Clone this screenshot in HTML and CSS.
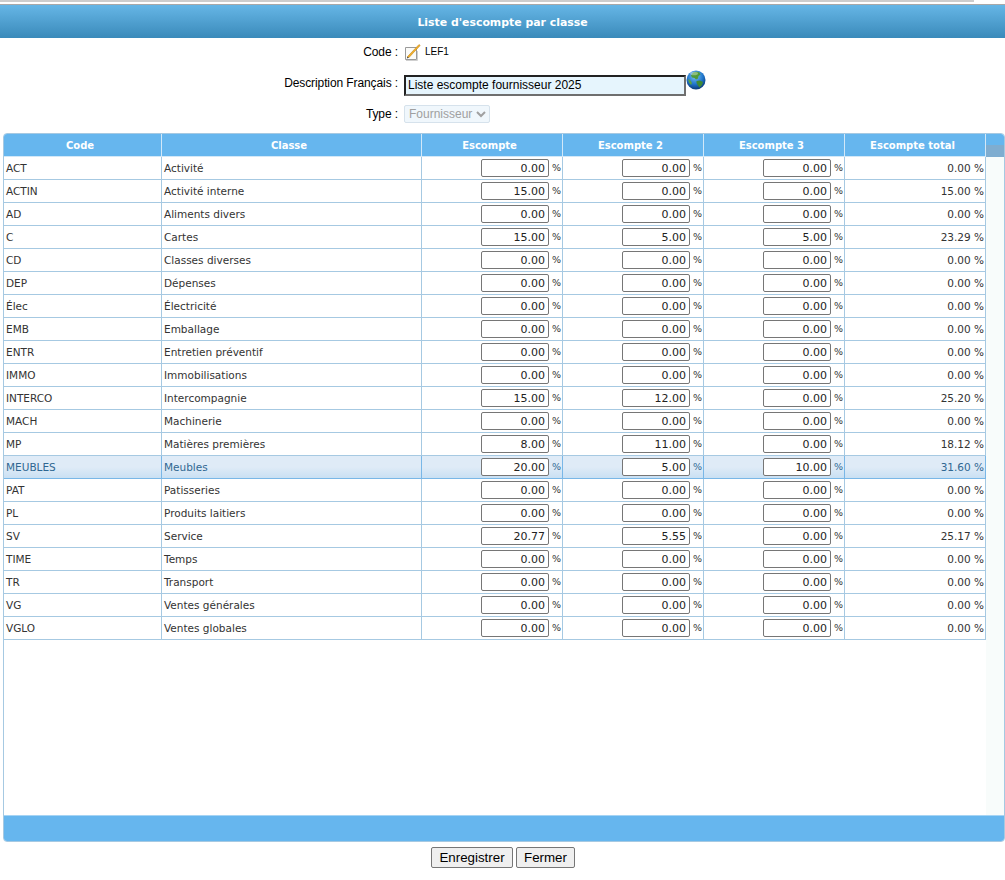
FILE: index.html
```html
<!DOCTYPE html>
<html lang="fr">
<head>
    <meta charset="UTF-8">
    <title>Liste d'escompte par classe</title>
    <link rel="stylesheet" href="styles.css">
</head>
<body>
    <div class="top-strip"><div class="top-strip-bar"></div></div>
    <div class="title-bar">Liste d'escompte par classe</div>

    <div class="form">
        <div class="form-row row-code">
            <label>Code :</label>
            <div class="field">
                <svg class="note-icon" width="16" height="17" viewBox="0 0 16 17">
                    <path d="M.5 3.500H11.500V15.500H.5Z" fill="#fbfbf9" stroke="#9a9a9a"/>
                    <path d="M1 16.500H12.500V7" fill="none" stroke="#cfcfcf"/>
                    <path d="M2.500 12.600 14 .5l1.200 1L3.800 13.700Z" fill="#f3b02a" stroke="#b97c12" stroke-width=".5"/>
                    <path d="M2.500 12.600 3.800 13.700 1.800 14.500Z" fill="#3a3a3a"/>
                </svg>
                <span class="code-value">LEF1</span>
            </div>
        </div>
        <div class="form-row row-desc">
            <label for="desc">Description Français :</label>
            <div class="field">
                <input id="desc" class="desc-input" type="text" value="Liste escompte fournisseur 2025">
                <svg class="globe-icon" width="20" height="20" viewBox="0 0 20 20">
                    <defs>
                        <radialGradient id="sea" cx="45%" cy="30%" r="70%">
                            <stop offset="0" stop-color="#7cc4f4"/>
                            <stop offset=".6" stop-color="#1f75cc"/>
                            <stop offset="1" stop-color="#0b3a78"/>
                        </radialGradient>
                    </defs>
                    <circle cx="10" cy="10" r="9.500" fill="url(#sea)"/>
                    <path d="M7 2.500c2-1 5-1 6.500 0l1 2-2 1.500-.5 2.500-2 1-1.500-1.500-2.500-.5L5 5.500Z" fill="#4f9a3a"/>
                    <path d="M10.500 11l3.500-.5 3 1.500-1 3-2.500 2.500-1.500-2-1.500-2.500Z" fill="#3f8a35"/>
                    <path d="M2 9l2.500 1.500L6 13l-1 2-2-2.500Z" fill="#5aa342"/>
                    <ellipse cx="8" cy="3.500" rx="4" ry="1.800" fill="#fff" opacity=".35"/>
                </svg>
            </div>
        </div>
        <div class="form-row row-type">
            <label for="type">Type :</label>
            <div class="field">
                <select id="type" class="type-select" disabled>
                    <option>Fournisseur</option>
                </select>
            </div>
        </div>
    </div>

    <div class="panel">
        <div class="panel-body">
            <table class="grid">
                <colgroup>
                    <col class="col-code"><col class="col-class">
                    <col class="col-num"><col class="col-num"><col class="col-num"><col class="col-num">
                </colgroup>
                <thead>
                    <tr><th>Code</th><th>Classe</th><th>Escompte</th><th>Escompte 2</th><th>Escompte 3</th><th>Escompte total</th></tr>
                </thead>
                <tbody>
                    <tr><td>ACT</td><td>Activité</td><td class="pct"><input value="0.00"> %</td><td class="pct"><input value="0.00"> %</td><td class="pct"><input value="0.00"> %</td><td class="total">0.00 %</td></tr>
                    <tr><td>ACTIN</td><td>Activité interne</td><td class="pct"><input value="15.00"> %</td><td class="pct"><input value="0.00"> %</td><td class="pct"><input value="0.00"> %</td><td class="total">15.00 %</td></tr>
                    <tr><td>AD</td><td>Aliments divers</td><td class="pct"><input value="0.00"> %</td><td class="pct"><input value="0.00"> %</td><td class="pct"><input value="0.00"> %</td><td class="total">0.00 %</td></tr>
                    <tr><td>C</td><td>Cartes</td><td class="pct"><input value="15.00"> %</td><td class="pct"><input value="5.00"> %</td><td class="pct"><input value="5.00"> %</td><td class="total">23.29 %</td></tr>
                    <tr><td>CD</td><td>Classes diverses</td><td class="pct"><input value="0.00"> %</td><td class="pct"><input value="0.00"> %</td><td class="pct"><input value="0.00"> %</td><td class="total">0.00 %</td></tr>
                    <tr><td>DEP</td><td>Dépenses</td><td class="pct"><input value="0.00"> %</td><td class="pct"><input value="0.00"> %</td><td class="pct"><input value="0.00"> %</td><td class="total">0.00 %</td></tr>
                    <tr><td>Élec</td><td>Électricité</td><td class="pct"><input value="0.00"> %</td><td class="pct"><input value="0.00"> %</td><td class="pct"><input value="0.00"> %</td><td class="total">0.00 %</td></tr>
                    <tr><td>EMB</td><td>Emballage</td><td class="pct"><input value="0.00"> %</td><td class="pct"><input value="0.00"> %</td><td class="pct"><input value="0.00"> %</td><td class="total">0.00 %</td></tr>
                    <tr><td>ENTR</td><td>Entretien préventif</td><td class="pct"><input value="0.00"> %</td><td class="pct"><input value="0.00"> %</td><td class="pct"><input value="0.00"> %</td><td class="total">0.00 %</td></tr>
                    <tr><td>IMMO</td><td>Immobilisations</td><td class="pct"><input value="0.00"> %</td><td class="pct"><input value="0.00"> %</td><td class="pct"><input value="0.00"> %</td><td class="total">0.00 %</td></tr>
                    <tr><td>INTERCO</td><td>Intercompagnie</td><td class="pct"><input value="15.00"> %</td><td class="pct"><input value="12.00"> %</td><td class="pct"><input value="0.00"> %</td><td class="total">25.20 %</td></tr>
                    <tr><td>MACH</td><td>Machinerie</td><td class="pct"><input value="0.00"> %</td><td class="pct"><input value="0.00"> %</td><td class="pct"><input value="0.00"> %</td><td class="total">0.00 %</td></tr>
                    <tr><td>MP</td><td>Matières premières</td><td class="pct"><input value="8.00"> %</td><td class="pct"><input value="11.00"> %</td><td class="pct"><input value="0.00"> %</td><td class="total">18.12 %</td></tr>
                    <tr class="selected"><td>MEUBLES</td><td>Meubles</td><td class="pct"><input value="20.00"> %</td><td class="pct"><input value="5.00"> %</td><td class="pct"><input value="10.00"> %</td><td class="total">31.60 %</td></tr>
                    <tr><td>PAT</td><td>Patisseries</td><td class="pct"><input value="0.00"> %</td><td class="pct"><input value="0.00"> %</td><td class="pct"><input value="0.00"> %</td><td class="total">0.00 %</td></tr>
                    <tr><td>PL</td><td>Produits laitiers</td><td class="pct"><input value="0.00"> %</td><td class="pct"><input value="0.00"> %</td><td class="pct"><input value="0.00"> %</td><td class="total">0.00 %</td></tr>
                    <tr><td>SV</td><td>Service</td><td class="pct"><input value="20.77"> %</td><td class="pct"><input value="5.55"> %</td><td class="pct"><input value="0.00"> %</td><td class="total">25.17 %</td></tr>
                    <tr><td>TIME</td><td>Temps</td><td class="pct"><input value="0.00"> %</td><td class="pct"><input value="0.00"> %</td><td class="pct"><input value="0.00"> %</td><td class="total">0.00 %</td></tr>
                    <tr><td>TR</td><td>Transport</td><td class="pct"><input value="0.00"> %</td><td class="pct"><input value="0.00"> %</td><td class="pct"><input value="0.00"> %</td><td class="total">0.00 %</td></tr>
                    <tr><td>VG</td><td>Ventes générales</td><td class="pct"><input value="0.00"> %</td><td class="pct"><input value="0.00"> %</td><td class="pct"><input value="0.00"> %</td><td class="total">0.00 %</td></tr>
                    <tr><td>VGLO</td><td>Ventes globales</td><td class="pct"><input value="0.00"> %</td><td class="pct"><input value="0.00"> %</td><td class="pct"><input value="0.00"> %</td><td class="total">0.00 %</td></tr>
                </tbody>
            </table>
            <div class="scroll-col">
                <div class="scroll-head"></div>
                <div class="scroll-thumb"></div>
            </div>
        </div>
        <div class="panel-footer"></div>
    </div>

    <div class="buttons">
        <button type="button">Enregistrer</button>
        <button type="button">Fermer</button>
    </div>
</body>
</html>
```

FILE: styles.css
```css
html, body { margin: 0; padding: 0; background-color: #fff; }
body { font-family: "Liberation Sans", Arial, sans-serif; font-size: 12px; color: #000; height: 880px; overflow: hidden; }

.top-strip { height: 5px; box-sizing: border-box; background-color: #fff; border-bottom: 1px solid #a8a8a8; }
.top-strip-bar { width: 974px; height: 2px; background-color: #cdcdcd; }
.title-bar {
    height: 33px;
    line-height: 35px;
    text-align: center;
    color: #fff;
    font-family: "DejaVu Sans", sans-serif;
    font-size: 10.900px;
    font-weight: bold;
    background: linear-gradient(to bottom, #66b6e6, #3a8aba);
}

.form { height: 95px; }
.form-row { display: flex; }
.form-row label { width: 398px; flex: none; text-align: right; letter-spacing: -.1px; }
.form-row .field { display: flex; margin-left: 6px; }
.row-code { height: 31px; padding-top: 6px; box-sizing: border-box; align-items: flex-start; }
.row-code label { line-height: 16px; }
.note-icon { display: block; margin-left: 1px; }
.code-value { margin-left: 4px; font-size: 10px; line-height: 15px; }
.row-desc { height: 31px; }
.row-desc label { line-height: 14px; margin-top: 7px; }
.desc-input {
    width: 282px;
    height: 21px;
    margin-top: 6px;
    padding: 0 2px 1px;
    box-sizing: border-box;
    border: 2px solid;
    border-color: #222 #6f6f6f #6f6f6f #222;
    background-color: #e6f5fd;
    font-family: "Liberation Sans", Arial, sans-serif;
    font-size: 12px;
    color: #000;
}
.globe-icon { margin-top: 1px; }
.row-type label { line-height: 14px; margin-top: 7px; }
.type-select {
    width: 86px;
    height: 18px;
    margin-top: 5px;
    box-sizing: border-box;
    border: 1px solid #d6e2ec;
    border-radius: 2px;
    background-color: #f0f7fc;
    color: #a0a0a0;
    font-family: "Liberation Sans", Arial, sans-serif;
    font-size: 12px;
    opacity: 1;
}

.panel {
    width: 1002px;
    height: 709px;
    margin-left: 3px;
    box-sizing: border-box;
    border: 1px solid #a6c9e2;
    border-radius: 4px;
    display: flex;
    flex-direction: column;
    overflow: hidden;
}
.panel-body { flex: 1; display: flex; align-items: flex-start; min-height: 0; }
.panel-footer { height: 26px; background-color: #66b6ee; border-top: 1px solid #a6d4f4; box-sizing: border-box; }

.grid {
    width: 982px;
    table-layout: fixed;
    border-collapse: separate;
    border-spacing: 0;
    font-family: "DejaVu Sans", sans-serif;
    font-size: 10.500px;
    color: #333;
}
.col-code { width: 158px; }
.col-class { width: 260px; }
.col-num { width: 141px; }
.grid th {
    height: 23px;
    padding: 0 5px 0 0;
    box-sizing: border-box;
    background-color: #66b6ee;
    color: #fff;
    font-size: 10px;
    font-weight: bold;
    border-right: 1px solid #d2e8f8;
    border-bottom: 1px solid #d2e8f8;
}
.grid td {
    height: 23px;
    padding: 0 0 0 2px;
    box-sizing: border-box;
    border-right: 1px solid #a6c9e2;
    border-bottom: 1px solid #a6c9e2;
    white-space: nowrap;
}
.grid .pct { text-align: right; padding-right: 1px; font-size: 9.500px; }
.grid .total { text-align: right; padding-right: 1px; }
.grid input {
    width: 68px;
    height: 18px;
    padding: 0 3px;
    box-sizing: border-box;
    border: 1px solid #767676;
    border-radius: 2px;
    background-color: #fff;
    text-align: right;
    font-family: "DejaVu Sans", sans-serif;
    font-size: 11px;
    color: #222;
    vertical-align: middle;
}
.grid .selected td {
    background: linear-gradient(to bottom, #dfebf7 0%, #dfebf7 50%, #c9e0f3 100%);
    color: #2f6792;
    border-right-color: #79b7e7;
    border-bottom-color: #79b7e7;
}

.scroll-col { width: 18px; height: 100%; background-color: #f8fcfb; }
.scroll-head { height: 11px; background-color: #66b6ee; }
.scroll-thumb { height: 12px; background-color: #7fadd0; }

.buttons { display: flex; justify-content: center; gap: 3px; margin-top: 5px; padding-left: 1px; }
.buttons button {
    height: 21px;
    padding: 0 7px;
    border: 1px solid #767676;
    border-radius: 2px;
    background-color: #efefef;
    color: #000;
    font-family: "Liberation Sans", Arial, sans-serif;
    font-size: 13.333px;
}
.buttons button:first-child { min-width: 82px; }
```
